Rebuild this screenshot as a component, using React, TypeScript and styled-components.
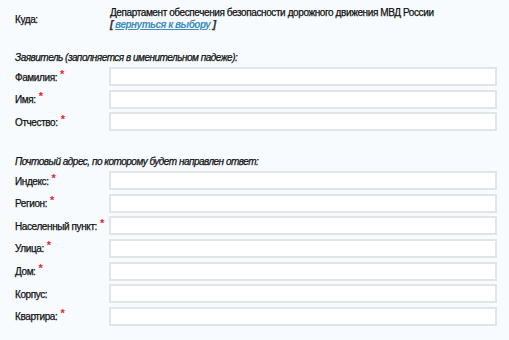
import React from "react";
import styled, { createGlobalStyle } from "styled-components";

const Global = createGlobalStyle`
  html, body { margin: 0; padding: 0; background: #f7fbfe; }
  body { font-family: "Liberation Sans", Arial, sans-serif; font-size: 10px; color: #111; }
`;

const Page = styled.div`
  width: 509px;
  height: 340px;
  box-sizing: border-box;
  padding: 7px 12px 0 15px;
  background: #f7fbfe;
  overflow: hidden;
`;

const TopRow = styled.div`
  display: grid;
  grid-template-columns: 95px 1fr;
  align-items: center;
`;

const Label = styled.div`
  font-size: 10px;
  letter-spacing: -0.4px;
  color: #111;
  white-space: nowrap;
  padding-top: 1px;
  -webkit-text-stroke: 0.25px #111;
`;

const Dest = styled.div`
  line-height: 11.5px;
  font-size: 10px;
  letter-spacing: -0.4px;
  color: #111;
  -webkit-text-stroke: 0.25px #111;
`;

const Back = styled.div`
  font-style: italic;
  font-weight: bold;
  letter-spacing: -0.5px;
  color: #333;
  a {
    color: #3d8dbd;
    text-decoration: underline;
    -webkit-text-stroke: 0;
  }
`;

const SectionTitle = styled.div<{ $top: number }>`
  margin-top: ${(p) => p.$top}px;
  font-style: italic;
  font-size: 10px;
  letter-spacing: -0.5px;
  color: #111;
  -webkit-text-stroke: 0.25px #111;
  line-height: 13px;
  margin-bottom: 3px;
`;

const Fields = styled.div`
  display: flex;
  flex-direction: column;
  gap: 3.6px;
`;

const Row = styled.div`
  display: grid;
  grid-template-columns: 94px 388px;
  align-items: center;
`;

const Star = styled.span`
  color: #e8242b;
  font-size: 11px;
  font-weight: bold;
  position: relative;
  top: -3px;
  margin-left: 3px;
  line-height: 0;
  -webkit-text-stroke: 0;
`;

const Input = styled.input`
  box-sizing: border-box;
  width: 388px;
  height: 19px;
  border: 2px solid #e1e5e6;
  background: #fff;
  margin: 0;
  padding: 0 4px;
  font-family: inherit;
  font-size: 11px;
  outline: none;
`;

type F = { label: string; req: boolean };

const person: F[] = [
  { label: "Фамилия:", req: true },
  { label: "Имя:", req: true },
  { label: "Отчество:", req: true },
];

const address: F[] = [
  { label: "Индекс:", req: true },
  { label: "Регион:", req: true },
  { label: "Населенный пункт:", req: true },
  { label: "Улица:", req: true },
  { label: "Дом:", req: true },
  { label: "Корпус:", req: false },
  { label: "Квартира:", req: true },
];

const FieldList = ({ items }: { items: F[] }) => (
  <Fields>
    {items.map((f) => (
      <Row key={f.label}>
        <Label>
          {f.label}
          {f.req && <Star>*</Star>}
        </Label>
        <Input type="text" />
      </Row>
    ))}
  </Fields>
);

export default function App() {
  return (
    <>
      <Global />
      <Page>
        <TopRow>
          <Label>Куда:</Label>
          <Dest>
            Департамент обеспечения безопасности дорожного движения МВД России
            <Back>
              [ <a href="#">вернуться к выбору</a> ]
            </Back>
          </Dest>
        </TopRow>
        <SectionTitle $top={21}>Заявитель (заполняется в именительном падеже):</SectionTitle>
        <FieldList items={person} />
        <SectionTitle $top={24}>Почтовый адрес, по которому будет направлен ответ:</SectionTitle>
        <FieldList items={address} />
      </Page>
    </>
  );
}
